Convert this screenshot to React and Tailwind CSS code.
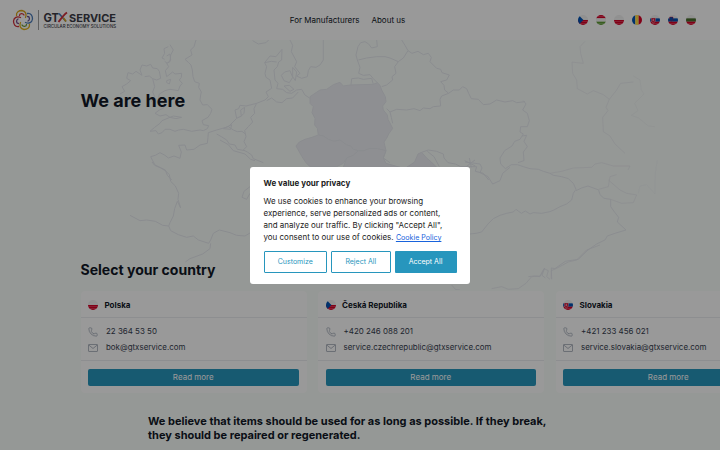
import React from "react";
import { Phone } from "lucide-react";

const navFlags = ["cz", "hu", "pl", "ro", "sk", "si", "bg"];

const countries = [
  { flag: "pl", name: "Polska", phone: "22 364 53 50", email: "bok@gtxservice.com" },
  { flag: "cz", name: "Česká Republika", phone: "+420 246 088 201", email: "service.czechrepublic@gtxservice.com" },
  { flag: "sk", name: "Slovakia", phone: "+421 233 456 021", email: "service.slovakia@gtxservice.com" },
];

const stripes = {
  cz: ["#f0f0f0", "#f0f0f0", "#f0f0f0", "#d80027", "#d80027", "#d80027"],
  hu: ["#d80027", "#d80027", "#f0f0f0", "#f0f0f0", "#5f9c35", "#5f9c35"],
  pl: ["#f0f0f0", "#f0f0f0", "#f0f0f0", "#d80027", "#d80027", "#d80027"],
  sk: ["#f0f0f0", "#f0f0f0", "#0052b4", "#0052b4", "#d80027", "#d80027"],
  si: ["#f0f0f0", "#f0f0f0", "#0052b4", "#0052b4", "#d80027", "#d80027"],
  bg: ["#f0f0f0", "#f0f0f0", "#496e2d", "#496e2d", "#d80027", "#d80027"],
};

const Flag = ({ code, className }) => (
  <svg viewBox="0 0 24 24" className={`rounded-full shrink-0 ${className}`}>
    {code === "ro" ? (
      <>
        <rect width="8" height="24" fill="#0052b4" />
        <rect x="8" width="8" height="24" fill="#ffda44" />
        <rect x="16" width="8" height="24" fill="#d80027" />
      </>
    ) : (
      stripes[code].map((color, i) => (
        <rect key={i} y={i * 4} width="24" height="4.1" fill={color} />
      ))
    )}
    {code === "cz" && <path d="M0 0 L4 3 L13 12 L4 21 L0 24Z" fill="#0052b4" />}
    {code === "sk" && (
      <>
        <path d="M3 7h10v6q0 4-5 6Q3 17 3 13z" fill="#d80027" stroke="#f0f0f0" strokeWidth="1" />
        <path d="M8 9v6M6 11h4M5.500 13.500h5" stroke="#f0f0f0" strokeWidth="1" />
      </>
    )}
    {code === "si" && (
      <path d="M4 5h8v5q0 4-4 5q-4-1-4-5z" fill="#0052b4" stroke="#d80027" strokeWidth="1" />
    )}
  </svg>
);

const MailIcon = () => (
  <svg viewBox="0 0 20 20" className="w-[10px] h-[10px] shrink-0 text-gray-400" fill="none" stroke="currentColor" strokeWidth="1.500">
    <rect x="1" y="3" width="18" height="14" rx="1" />
    <path d="M1.500 4L10 11L18.500 4" />
  </svg>
);

const Logo = () => (
  <div className="flex items-center">
    <svg viewBox="0 0 22 22" className="w-[22px] h-[22px]" fill="none" strokeWidth="1.300" strokeLinecap="round">
      <path d="M4.500 6.500C4 3 7 1.500 10 1.500C13.500 2 15 5 13.500 8.500" stroke="#d9a51c" />
      <path d="M7.500 6.500C7.500 4 11 4 12 6" stroke="#d1323d" />
      <path d="M15.500 4.500C19 4 20.500 7 20.500 10C20 13.500 17 15 13.500 13.500" stroke="#4c7cb8" />
      <path d="M15.500 7.500C18 7.500 18 11 16 12" stroke="#675394" />
      <path d="M17.500 15.500C18 19 15 20.500 12 20.500C8.500 20 7 17 8.500 13.500" stroke="#e2b31b" />
      <path d="M14.500 15.500C14.500 18 11 18 10 16" stroke="#6d9b3c" />
      <path d="M6.500 17.500C3 18 1.500 15 1.500 12C2 8.500 5 7 8.500 8.500" stroke="#d1323d" />
      <path d="M6.500 14.500C4 14.500 4 11 6 10" stroke="#7b4c8b" />
    </svg>
    <div className="w-px h-5 bg-[#a0a0a0] ml-[4px] mr-[4px]" />
    <svg viewBox="0 0 74 20" className="w-[74px] h-5" fontFamily="Inter, sans-serif">
      <text x="0.500" y="11.500" fontSize="11.500" fontWeight="700" fill="#3c3c46" textLength="15.500" lengthAdjust="spacingAndGlyphs">GT</text>
      <path d="M16 3.500l7 8" stroke="#4c7cb8" strokeWidth="1.600" />
      <path d="M24 2.500C20.500 5 18.500 8 15.500 12" stroke="#d1323d" strokeWidth="1.800" fill="none" />
      <path d="M20.500 8l2.500 3.500" stroke="#d9a51c" strokeWidth="1.600" />
      <text x="26" y="11.500" fontSize="11" fontWeight="700" fill="#3c3c46" textLength="47" lengthAdjust="spacingAndGlyphs">SERVICE</text>
      <text x="0.500" y="18" fontSize="4.300" fontWeight="500" fill="#3c3c46" textLength="72.500" lengthAdjust="spacingAndGlyphs">CIRCULAR ECONOMY SOLUTIONS</text>
    </svg>
  </div>
);

const EuropeMap = () => (
  <svg
    viewBox="0 40 720 250"
    className="absolute left-0 top-0 w-[720px] h-[250px]"
    fill="none"
    stroke="#e7eaef"
    strokeWidth="3"
    strokeLinejoin="round"
  >
    {/* British Isles */}
    <g transform="translate(120 30) scale(.3333)">
      <path d="M228 30L222 50L212 60L216 75L195 88L206 98L213 105L217 120L219 140L224 155L238 160L236 172L244 186L242 195L240 210L248 225L262 224L276 238L272 250L264 262L246 272L250 284L266 287L262 296L250 302L240 300L215 304L190 298L176 300L165 304L150 298L135 298L126 308L115 312L108 302L90 304L104 292L120 280L126 272L150 262L168 266L185 262L160 258L150 262L138 254L120 258L105 250L118 240L130 235L134 222L128 212L115 206L118 192L135 182L150 178L175 182L180 168L187 160L178 150L184 142L185 130L165 132L158 126L140 140L136 122L146 110L140 100L150 95L152 75L160 60L150 44" />
      <path d="M145 50L132 56L134 70L126 84L134 88M140 78L150 72L152 90L142 100L134 94M140 152L152 148L148 162L140 158Z" />
      <path d="M24 128L38 132L48 124L66 136L60 120L66 105L80 108L92 103L98 114L112 116L118 124L122 145L110 150L98 146L88 138L74 140M98 146L104 170L98 186L104 200L94 216M24 128L20 145L32 152L20 162L6 170L14 184L0 192" />
    </g>
    {/* Western and central mainland */}
    <g transform="translate(120 30) scale(.3333)">
      <path d="M155 450L142 436L136 420L120 412L105 405L98 392L92 380L106 376L120 368L135 376L145 384L162 378L180 385L184 366L176 346L195 345L200 360L222 358L240 345L262 340L264 322L265 308L290 300L325 290L350 265L345 240L356 236L360 226L378 228L410 220L435 210L445 200L438 186L455 175L450 150L438 142L435 130L440 110L434 98L450 78L468 80L486 58L485 90L476 96L472 110L462 120L465 150L474 160L470 176L488 178L500 188L515 190L530 180L545 178L555 195L570 205" />
      <path d="M410 220L402 236L404 250L392 262L398 276L385 290L374 302L378 320L372 335L380 350L370 360L382 366L395 375L400 386L430 398" />
      <path d="M290 312L304 320L320 330L328 342L345 345L352 358L375 362M325 290L340 300L352 305L366 304L376 312M350 265L364 258L362 240L374 232L372 250L360 262M310 296L335 284L332 298Z" />
      <path d="M434 98L454 94L470 96M494 126L510 122L518 142L508 158L492 152L484 136ZM518 112L530 126L526 152L518 140ZM492 168L508 166L522 178L510 184Z" />
      <path d="M510 30L518 46L514 65L530 95L524 110L540 130L530 138L545 145L562 140L565 122L572 110L588 112L600 105L610 90L610 30M398 32L415 42L438 38L446 30" />
      <path d="M440 212L455 204L470 216L486 218L500 206L518 204L535 186" />
    </g>
    {/* Markets the company serves */}
    <g transform="translate(290 30) scale(.3333)" fill="#edeef3">
      <path d="M60 200L90 180L110 178L130 164L150 157L160 168L180 165L250 163L262 158L270 166L275 180L286 200L288 215L278 228L280 240L292 255L294 268L308 295L296 312L290 325L282 336L288 362L262 356L240 355L222 362L205 362L190 358L182 348L170 345L150 330L132 334L115 328L100 318L85 315L82 295L74 285L75 265L66 248L70 230L60 220Z" />
      <path d="M18 348L28 336L45 328L66 322L85 315L100 318L115 328L132 334L150 330L170 345L182 348L190 358L205 362L190 376L170 384L160 400L140 410L60 410L48 398L36 380Z" />
      <path d="M205 362L222 362L240 355L262 356L288 362L280 384L288 400L330 412L160 412L170 384L190 376Z" />
      <path d="M350 412L374 396L384 372L395 367L410 384L424 396L440 412Z" />
    </g>
    {/* Baltics, Belarus and Ukraine */}
    <g transform="translate(290 30) scale(.3333)">
      <path d="M183 165L185 146L205 144L220 148L245 145L250 163M262 158L250 146L240 134L220 136L206 130L210 112L202 90M205 90L230 84L260 80L285 80L300 84L325 95L314 110L318 130L306 140L308 150L290 165L275 170" />
      <path d="M202 90L198 75L204 50L212 38L225 35L236 42L245 54L262 50L260 30M335 30L345 46L354 62L366 70L384 64L400 74L415 70L424 82L420 95L440 115L452 118L456 128L478 135L470 150L452 155L462 166L464 180L476 190L455 198L450 208L452 228L430 230L420 236L400 234L390 242L372 236L350 240L320 238L300 246L290 236M354 62L340 84L325 95" />
      <path d="M300 246L304 262L308 280M476 190L490 180L508 180L518 170L530 176L536 190L544 206L565 208L580 224L600 222L620 210L645 216L668 212L680 218L705 215M288 362L280 384L300 398" />
      <path d="M395 367L415 360L440 364L460 372L462 384L474 398L496 402L512 410M512 410L560 410L556 424L580 430L596 450M538 384L544 412M524 392L556 408M555 390L526 412M412 364L432 380L448 410" />
    </g>
    {/* Black Sea and the Caucasus */}
    <g transform="translate(500 30) scale(.3333)" strokeOpacity=".9">
      <path d="M70 212L78 222L68 240L82 250L88 272L82 290L62 290L60 306L70 312L60 328L44 334L36 348L14 362L0 384L2 402L16 416L34 404L52 404L70 410L90 416L115 418L130 424L150 430L160 436L185 440L205 446L220 460L228 478L220 490L215 510L200 522L180 530L162 540L150 545L125 550L100 548L90 552L76 543L64 550L56 544L48 538L40 546L20 550L0 556L-20 566L-36 582L-55 606L-72 610L-90 612" />
      <path d="M66 318L80 316L72 334L82 350L70 366L72 392L54 398M-105 396L-60 402L-54 414L-60 428L-36 440L-22 462L0 452L8 430L30 412" />
      <path d="M228 482L245 474L264 468L280 474L296 480L300 494L312 505L332 508L332 530L345 548L356 562L352 576L378 600L345 610L322 618L315 630L290 642L264 660L235 688L196 694L165 716L154 714L155 748M85 740L104 738L120 740L134 714L126 736L136 744" />
      <path d="M150 430L185 424L220 414L275 412L285 402L305 398L340 408L390 408L384 420M296 478L325 470L330 440L350 434M332 508L365 520L400 518L410 495L380 490L360 480L325 450" strokeOpacity=".6" />
      <path d="M415 490L420 468L440 464L465 492L466 430L472 390" strokeOpacity=".25" />
    </g>
    <g transform="translate(500 30) scale(.3333)" strokeOpacity=".6">
      <path d="M255 34L240 50L242 70L250 100L230 98L216 96L218 130L230 150L232 176L262 192L280 182L310 194L328 208L318 232L324 242L308 262L310 305L330 318L345 342L375 370M328 208L350 180L362 160L400 156" />
      <path d="M400 138L420 150L424 180L432 192L404 220L414 242L394 256L416 264L445 288L465 290" strokeOpacity=".35" />
    </g>
    {/* France and Iberia */}
    <g transform="translate(130 140) scale(.3333)">
      <path d="M66 66L74 76L92 84L106 92L118 104L122 124L136 138L146 160L144 178L152 204L142 184L134 206L130 228L120 248L116 258L98 256L76 244L50 240L30 242L0 226M116 258L122 272L145 284L170 292L190 288L205 300L236 310L242 300L250 280L268 270L300 278L320 286L345 288L365 276M242 310L240 326L218 342L180 356L166 366" />
      <path d="M270 0L295 14L310 32L345 42L362 58L375 62M360 140L342 154L336 172L350 178L360 160" />
    </g>
    <g transform="translate(440 150) scale(.3333)">
      <path d="M480 285L440 300L410 330L385 336L350 355L334 362L334 386M275 380L300 378L312 356L325 362L320 380L330 388M275 380L258 400L235 416L205 418L185 410L155 416M35 405L46 418L60 420" strokeOpacity=".8" />
    </g>
  </svg>
);

const CountryCard = ({ country }) => (
  <div className="w-[226px] h-[102px] shrink-0 rounded bg-white">
    <div className="flex items-center gap-[6.500px] h-[27px] pt-px pl-[7.500px] pr-2 border-b border-[#ebedf0]">
      <Flag code={country.flag} className="w-[10px] h-[10px]" />
      <h3 className="text-[8px] leading-3 font-bold text-[#111827]">{country.name}</h3>
    </div>
    <div className="h-[43px] pl-[7.500px] pr-2 pt-[6px] border-b border-[#ebedf0] text-[7.950px] text-[#374151]">
      <div className="flex items-center h-[15.500px] gap-2">
        <Phone className="w-[10px] h-[10px] text-gray-400" strokeWidth={1.7} />
        {country.phone}
      </div>
      <div className="flex items-center h-4 gap-2">
        <MailIcon />
        {country.email}
      </div>
    </div>
    <div className="pl-[7.500px] pr-2 pt-2">
      <button className="block w-full h-[16.500px] rounded-[2px] bg-[#2796bd] text-white text-[8px]">Read more</button>
    </div>
  </div>
);

const CookieDialog = () => (
  <div className="fixed inset-0 z-50 bg-black/40">
    <div className="absolute left-[250px] top-[166.500px] w-[220px] h-[117px] rounded-[3px] bg-white px-[13.500px] pt-[10.500px] text-[#212121]">
      <h2 className="text-[8px] leading-3 font-bold">We value your privacy</h2>
      <p className="mt-[6px] text-[7.970px] leading-[12px] whitespace-nowrap">
        We use cookies to enhance your browsing
        <br />
        experience, serve personalized ads or content,
        <br />
        and analyze our traffic. By clicking "Accept All",
        <br />
        you consent to our use of cookies.{" "}
        <a href="#" className="text-[7.100px] text-[#1863dc] underline">Cookie Policy</a>
      </p>
      <div className="flex gap-1 mt-[7px] text-[7px]">
        <button className="w-[63.500px] h-[22px] pt-px rounded-[1px] border border-[#2796bd] text-[#2796bd]">Customize</button>
        <button className="w-[59.500px] h-[22px] pt-px rounded-[1px] border border-[#2796bd] text-[#2796bd]">Reject All</button>
        <button className="w-[62px] h-[22px] pt-px rounded-[1px] bg-[#2796bd] text-white">Accept All</button>
      </div>
    </div>
  </div>
);

const App = () => {
  return (
    <div className="w-[720px] h-[450px] overflow-hidden bg-[#f8fdfa] font-['Inter',sans-serif] text-[#111827]">
      <header className="flex items-center justify-between h-10 pl-3 pr-6 bg-white">
        <Logo />
        <nav className="flex gap-3 text-[8px] text-[#111827]">
          <a href="#">For Manufacturers</a>
          <a href="#">About us</a>
        </nav>
        <div className="flex gap-2">
          {navFlags.map((code) => (
            <Flag key={code} code={code} className="w-[10px] h-[10px]" />
          ))}
        </div>
      </header>

      <main className="relative">
        <EuropeMap />
        <div className="relative pl-[80.500px] pt-[49px]">
          <h1 className="text-[18px] leading-6 font-bold">We are here</h1>
          <h2 className="mt-[147px] text-[14.050px] leading-5 font-bold">Select your country</h2>
          <div className="flex gap-[11.500px] mt-[11px]">
            {countries.map((country) => (
              <CountryCard key={country.name} country={country} />
            ))}
          </div>
          <p className="ml-[67.500px] mt-[21px] text-[11px] leading-[14px] font-bold">
            We believe that items should be used for as long as possible. If they break,
            <br />
            they should be repaired or regenerated.
          </p>
        </div>
      </main>

      <CookieDialog />
    </div>
  );
};

export default App;
